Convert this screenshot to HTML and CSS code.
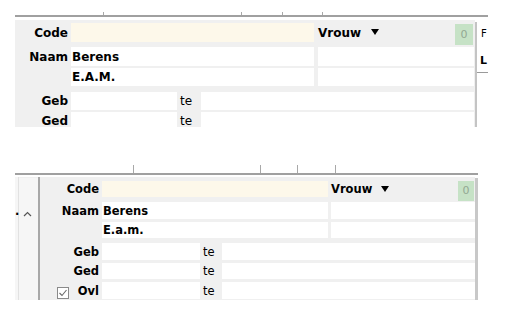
FILE: index.html
```html
<!DOCTYPE html>
<html>

<head>
    <title>Persoon</title>
    <link rel="stylesheet" href="styles.css">
</head>

<body>
    <!-- first capture -->
    <div class="shot shot_top">
        <div class="tabs">
            <span class="tab"></span><span class="tab"></span><span class="tab"></span><span class="tab"></span>
        </div>
        <div class="rule"></div>
        <div class="panel">
            <div class="form">
                <div class="row r1">
                    <span class="label">Code</span>
                    <span class="field code"></span>
                    <span class="extra">Vrouw <i class="arrow"></i><b class="count">0</b></span>
                </div>
                <div class="row r2">
                    <span class="label">Naam</span>
                    <span class="field">Berens</span>
                    <span class="extra box"></span>
                </div>
                <div class="row r3">
                    <span class="label"></span>
                    <span class="field">E.A.M.</span>
                    <span class="extra box"></span>
                </div>
                <div class="row r4">
                    <span class="label">Geb</span>
                    <span class="field date"></span>
                    <span class="te">te</span>
                    <span class="field place"></span>
                </div>
                <div class="row r5">
                    <span class="label">Ged</span>
                    <span class="field date"></span>
                    <span class="te">te</span>
                    <span class="field place"></span>
                </div>
            </div>
            <div class="vsep"></div>
            <div class="side">
                <div class="side_f">F</div>
                <div class="side_l">L</div>
            </div>
        </div>
    </div>

    <!-- second capture -->
    <div class="shot shot_bottom">
        <div class="tabs">
            <span class="tab"></span><span class="tab"></span><span class="tab"></span><span class="tab"></span>
        </div>
        <div class="rule"></div>
        <div class="panel">
            <div class="list">
                <div class="list_col"><span class="dot">.</span></div>
                <div class="list_bar">
                    <svg width="9" height="6" viewBox="0 0 9 6"><path d="M1 5 L4.5 1.5 L8 5" fill="none" stroke="#555" stroke-width="1.2"/></svg>
                </div>
            </div>
            <div class="lsep"></div>
            <div class="form">
                <div class="row r1">
                    <span class="label">Code</span>
                    <span class="field code"></span>
                    <span class="extra">Vrouw <i class="arrow"></i><b class="count">0</b></span>
                </div>
                <div class="row r2">
                    <span class="label">Naam</span>
                    <span class="field">Berens</span>
                    <span class="extra box"></span>
                </div>
                <div class="row r3">
                    <span class="label"></span>
                    <span class="field">E.a.m.</span>
                    <span class="extra box"></span>
                </div>
                <div class="row r4">
                    <span class="label">Geb</span>
                    <span class="field date"></span>
                    <span class="te">te</span>
                    <span class="field place"></span>
                </div>
                <div class="row r5">
                    <span class="label">Ged</span>
                    <span class="field date"></span>
                    <span class="te">te</span>
                    <span class="field place"></span>
                </div>
                <div class="row r6">
                    <span class="label">
                        <svg class="check" width="12" height="12" viewBox="0 0 12 12"><rect x="0.5" y="0.5" width="11" height="11" fill="#fff" stroke="#8a8a8a"/><path d="M2.5 6 L5 8.5 L9.5 3" fill="none" stroke="#6a6a6a" stroke-width="1.1"/></svg>
                        Ovl
                    </span>
                    <span class="field date"></span>
                    <span class="te">te</span>
                    <span class="field place"></span>
                </div>
            </div>
            <div class="vscroll"></div>
        </div>
    </div>
</body>

</html>
```

FILE: styles.css
```css
/* CSS Styles */
* {
    margin: 0;
    padding: 0;
    box-sizing: border-box;
}

body {
    background-color: #fff;
    font-family: "DejaVu Sans", Verdana, sans-serif;
    font-size: 12px;
    color: #000;
}

.shot {
    margin-left: 15px;
    display: flex;
    flex-direction: column;
}

/* tab strip ticks */
.tabs {
    display: flex;
}

.tab {
    border-right: 1px solid #a8a8a8;
}

.rule {
    height: 2px;
    background-color: #a0a0a0;
}

.panel {
    display: flex;
    overflow: hidden;
}

.form {
    background-color: #f0f0f0;
    display: flex;
    flex-direction: column;
}

.row {
    display: flex;
    flex-shrink: 0;
}

.label {
    font-weight: bold;
    text-align: right;
    flex-shrink: 0;
}

.field {
    background-color: #fff;
    font-weight: bold;
    padding-left: 1px;
    flex-shrink: 0;
    white-space: nowrap;
}

.field.code {
    background-color: #fdf8ea;
}

.extra {
    font-weight: bold;
    display: flex;
    align-items: flex-start;
    flex-shrink: 0;
}

.extra.box {
    background-color: #fff;
}

.arrow {
    width: 0;
    height: 0;
    border-left: 4.5px solid transparent;
    border-right: 4.5px solid transparent;
    border-top: 6px solid #000;
}

.count {
    margin-left: auto;
    background-color: #c6e2c6;
    color: #93a893;
    font-weight: normal;
    text-align: center;
}

.te {
    padding-left: 3px;
    flex-shrink: 0;
}

/* first capture */
.shot_top {
    margin-top: 12px;
    width: 473px;
}

.shot_top .tab {
    height: 3px;
}

.shot_top .tab:nth-child(1) { width: 89px; }
.shot_top .tab:nth-child(2) { width: 138px; }
.shot_top .tab:nth-child(3) { width: 41px; }
.shot_top .tab:nth-child(4) { width: 40px; }

.shot_top .panel {
    margin-top: 3px;
    height: 107px;
}

.shot_top .form {
    width: 460px;
}

.shot_top .row {
    height: 19px;
    line-height: 20px;
}

.shot_top .label {
    width: 56px;
    padding-right: 3px;
}

.shot_top .field {
    width: 243px;
}

.shot_top .extra {
    width: 156px;
    margin-left: 4px;
}

.shot_top .r1 { margin-top: 3px; }
.shot_top .r2 { margin-top: 5px; }
.shot_top .r3 { margin-top: 2px; height: 18px; line-height: 19px; }
.shot_top .r4 { margin-top: 6px; height: 18px; line-height: 19px; }
.shot_top .r5 { margin-top: 2px; height: 18px; line-height: 19px; }

.shot_top .arrow {
    margin: 6px 0 0 10px;
}

.shot_top .count {
    width: 18px;
    height: 21px;
    line-height: 21px;
    margin-top: 1px;
    margin-right: 1px;
    font-size: 11px;
}

.shot_top .date {
    width: 106px;
}

.shot_top .te {
    width: 24px;
}

.shot_top .place {
    width: 273px;
}

.vsep {
    width: 2px;
    margin-top: 2px;
    background-color: #c4c4c4;
}

.side {
    width: 11px;
    background-color: #fff;
}

.side_f {
    padding-left: 4px;
    margin-top: 7px;
    font-size: 10px;
    line-height: 14px;
}

.side_l {
    padding-left: 3px;
    margin-top: 13px;
    font-size: 11px;
    font-weight: bold;
    line-height: 14px;
    padding-bottom: 4px;
    border-bottom: 1px solid #9a9a9a;
}

/* second capture */
.shot_bottom {
    margin-top: 38px;
    width: 463px;
    font-size: 11.5px;
}

.shot_bottom .tab {
    height: 8px;
}

.shot_bottom .tab:nth-child(1) { width: 119px; }
.shot_bottom .tab:nth-child(2) { width: 127px; }
.shot_bottom .tab:nth-child(3) { width: 37px; }
.shot_bottom .tab:nth-child(4) { width: 38px; }

.shot_bottom .panel {
    margin-top: 2px;
    height: 123px;
}

.list {
    width: 23px;
    display: flex;
    background-color: #f6f6f6;
}

.list_col {
    width: 4px;
    border-right: 1px solid #e2e2e2;
}

.dot {
    font-weight: bold;
    display: block;
    margin-top: 29px;
    line-height: 10px;
}

.list_bar {
    flex: 1;
    padding: 33px 0 0 4px;
    border-top: 1px solid #f0f0f0;
}

.list_bar svg {
    display: block;
}

.lsep {
    width: 2px;
    background-color: #a8a8a8;
}

.shot_bottom .form {
    width: 435px;
}

.shot_bottom .row {
    height: 17px;
    line-height: 18px;
}

.shot_bottom .label {
    width: 62px;
    padding-right: 3px;
}

.shot_bottom .field {
    width: 226px;
}

.shot_bottom .extra {
    width: 144px;
    margin-left: 3px;
}

.shot_bottom .r1 { margin-top: 4px; height: 16px; line-height: 17px; }
.shot_bottom .r2 { margin-top: 5px; }
.shot_bottom .r3 { margin-top: 3px; height: 16px; line-height: 17px; }
.shot_bottom .r4 { margin-top: 5px; }
.shot_bottom .r5 { margin-top: 3px; height: 16px; line-height: 17px; }
.shot_bottom .r6 { margin-top: 3px; }

.shot_bottom .arrow {
    margin: 5px 0 0 9px;
}

.shot_bottom .count {
    width: 16px;
    height: 20px;
    line-height: 20px;
    margin-right: 1px;
    font-size: 11px;
}

.shot_bottom .date {
    width: 98px;
}

.shot_bottom .te {
    width: 22px;
}

.shot_bottom .place {
    width: 253px;
}

.shot_bottom .r6 .label {
    display: flex;
    align-items: center;
    justify-content: flex-end;
    gap: 9px;
}

.check {
    display: block;
    margin-top: 4px;
}

.vscroll {
    width: 3px;
    margin-top: 1px;
    background-color: #c8c8c8;
}
```
